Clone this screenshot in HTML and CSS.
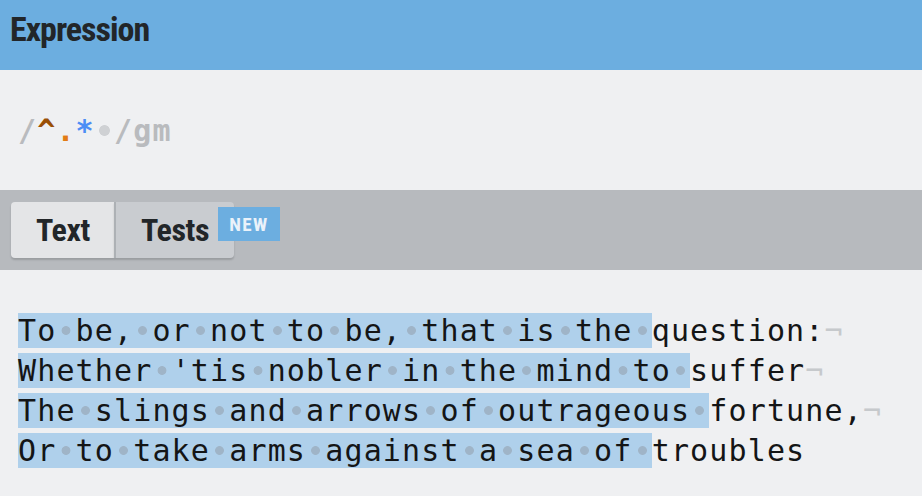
FILE: index.html
```html
<!DOCTYPE html>
<html lang="en">
<head>
<meta charset="utf-8">
<title>Expression</title>
<link rel="stylesheet" href="styles.css">
</head>
<body>
<header class="hdr"><h1 class="hdr-title">Expression</h1></header>
<section class="expr">
  <div class="regex"><span class="r-delim">/</span><span class="r-anchor">^</span><span class="r-dot">.</span><span class="r-quant">*</span><span class="sp sp-light"> </span><span class="r-delim">/gm</span></div>
</section>
<nav class="tabbar">
  <div class="tabs">
    <button class="tab tab-active">Text</button>
    <button class="tab tab-tests">Tests<span class="badge">NEW</span></button>
  </div>
</nav>
<section class="text">
  <div class="line"><span class="m">To<span class="sp"> </span>be,<span class="sp"> </span>or<span class="sp"> </span>not<span class="sp"> </span>to<span class="sp"> </span>be,<span class="sp"> </span>that<span class="sp"> </span>is<span class="sp"> </span>the<span class="sp"> </span></span>question:<span class="nl">¬</span></div>
  <div class="line"><span class="m">Whether<span class="sp"> </span>'tis<span class="sp"> </span>nobler<span class="sp"> </span>in<span class="sp"> </span>the<span class="sp"> </span>mind<span class="sp"> </span>to<span class="sp"> </span></span>suffer<span class="nl">¬</span></div>
  <div class="line"><span class="m">The<span class="sp"> </span>slings<span class="sp"> </span>and<span class="sp"> </span>arrows<span class="sp"> </span>of<span class="sp"> </span>outrageous<span class="sp"> </span></span>fortune,<span class="nl">¬</span></div>
  <div class="line"><span class="m">Or<span class="sp"> </span>to<span class="sp"> </span>take<span class="sp"> </span>arms<span class="sp"> </span>against<span class="sp"> </span>a<span class="sp"> </span>sea<span class="sp"> </span>of<span class="sp"> </span></span>troubles</div>
</section>
</body>
</html>
```
FILE: styles.css
```css
* { box-sizing: border-box; }
html, body { margin: 0; padding: 0; }
body {
  background: #eff0f2;
  width: 922px;
  height: 496px;
  overflow: hidden;
  font-family: Roboto, "Noto Sans", sans-serif;
}
.hdr {
  height: 70px;
  background: #6caee0;
  padding: 9px 0 0 10px;
}
.hdr-title {
  margin: 0;
  font-family: "Roboto Condensed", Roboto, sans-serif;
  font-stretch: 75%;
  font-weight: 700;
  font-size: 34px;
  letter-spacing: -1px;
  line-height: 40px;
  color: #222629;
}
.expr {
  height: 120px;
  padding: 41px 0 0 18px;
}
.regex, .line {
  font-family: "DejaVu Sans Mono", monospace;
  font-size: 30px;
  letter-spacing: 1.14px;
  line-height: 40px;
  white-space: pre;
}
.regex { font-weight: 700; color: #b9bbbe; }
.r-anchor { color: #9a4f05; }
.r-dot { color: #e27c15; }
.r-quant { color: #4d8ef5; }
.sp {
  background: radial-gradient(circle at 50% 50%, #9fb4c7 0, #9fb4c7 4px, rgba(159,180,199,0) 4.8px);
}
.sp-light {
  background: radial-gradient(circle at 50% 50%, #cfd1d4 0, #cfd1d4 5px, rgba(207,209,212,0) 5.8px);
}
.tabbar {
  height: 80px;
  background: #b7babe;
  padding: 12px 0 0 11px;
}
.tabs { display: flex; }
.tab {
  position: relative;
  height: 56px;
  border: 0;
  margin: 0;
  display: flex;
  align-items: center;
  font-family: "Roboto Condensed", Roboto, sans-serif;
  font-stretch: 75%;
  font-weight: 700;
  font-size: 32px;
  letter-spacing: -0.4px;
  color: #222629;
  box-shadow: 0 2px 2px rgba(0,0,0,0.16);
  cursor: pointer;
}
.tab-active {
  width: 103px;
  padding: 0 0 0 25px;
  background: #e4e5e7;
  border-radius: 4px 0 0 4px;
}
.tab-tests {
  width: 120px;
  padding: 0 0 0 25px;
  background: #c9ccd0;
  border-left: 2px solid #adb1b5;
  border-radius: 0 4px 4px 0;
}
.badge {
  position: absolute;
  left: 102px;
  top: 5px;
  width: 62px;
  height: 34px;
  background: #6caee0;
  color: #eaf2fa;
  font-size: 19px;
  letter-spacing: 1.5px;
  display: flex;
  align-items: center;
  justify-content: center;
}
.text {
  padding: 41px 0 0 18px;
}
.line { color: #141516; }
.m { background: #afd0eb; }
.nl { color: #c6c9cc; }
```
